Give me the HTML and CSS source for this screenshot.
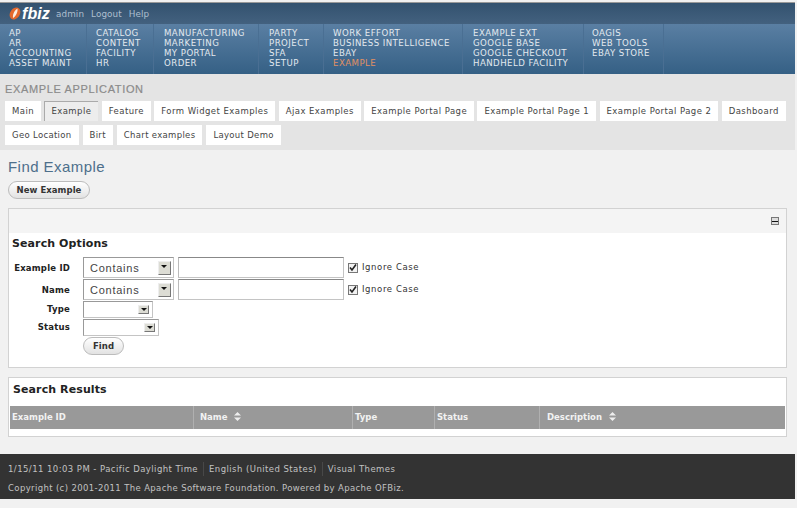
FILE: index.html
```html
<!DOCTYPE html>
<html>
<head>
<meta charset="utf-8">
<title>OFBiz: Example Application</title>
<link rel="stylesheet" href="styles.css">
</head>
<body>
<div class="page">

<div class="topbar">
	<div class="logo">
		<svg class="logo_o" width="13" height="13" viewBox="0 0 13 13">
			<ellipse cx="6" cy="6.5" rx="6.5" ry="4.8" transform="rotate(-55 6 6.5)" fill="#e4682c"/>
			<path d="M8.5 1.5C5.5 3.5 3.5 7 4 11c2-1 5-5 4.500-9.500z" fill="#fbeee2"/>
		</svg><span class="logo_text">fbiz</span>
	</div>
	<a>admin</a><a>Logout</a><a>Help</a>
</div>

<div class="appnav">
	<ul class="c1"><li>AP</li><li>AR</li><li>ACCOUNTING</li><li>ASSET MAINT</li></ul>
	<ul class="c2"><li>CATALOG</li><li>CONTENT</li><li>FACILITY</li><li>HR</li></ul>
	<ul class="c3"><li>MANUFACTURING</li><li>MARKETING</li><li>MY PORTAL</li><li>ORDER</li></ul>
	<ul class="c4"><li>PARTY</li><li>PROJECT</li><li>SFA</li><li>SETUP</li></ul>
	<ul class="c5"><li>WORK EFFORT</li><li>BUSINESS INTELLIGENCE</li><li>EBAY</li><li class="selected">EXAMPLE</li></ul>
	<ul class="c6"><li>EXAMPLE EXT</li><li>GOOGLE BASE</li><li>GOOGLE CHECKOUT</li><li>HANDHELD FACILITY</li></ul>
	<ul class="c7"><li>OAGIS</li><li>WEB TOOLS</li><li>EBAY STORE</li></ul>
</div>

<div class="appbar">
	<h2 class="apptitle">EXAMPLE APPLICATION</h2>
	<div class="tabs">
		<a>Main</a><a class="active">Example</a><a>Feature</a><a>Form Widget Examples</a><a>Ajax Examples</a><a>Example Portal Page</a><a>Example Portal Page 1</a><a>Example Portal Page 2</a><a>Dashboard</a>
	</div>
	<div class="tabs row2">
		<a>Geo Location</a><a>Birt</a><a>Chart examples</a><a>Layout Demo</a>
	</div>
</div>

<div class="content">
	<h1 class="pagetitle">Find Example</h1>
	<a class="button newbtn">New Example</a>

	<div class="box searchbox">
		<div class="boxhead"><span class="collapse"></span></div>
		<h3>Search Options</h3>
		<div class="form">
			<label>Example ID</label>
			<div class="field">
				<span class="select bigselect">Contains<i class="arrow"></i></span>
				<span class="input"></span>
				<span class="check"><svg width="10" height="10" viewBox="0 0 10 10"><path d="M2 4.500l2 2.500 4-5.500" fill="none" stroke="#222" stroke-width="1.600"/></svg></span>
				<span class="ignore">Ignore Case</span>
			</div>
			<label>Name</label>
			<div class="field">
				<span class="select bigselect">Contains<i class="arrow"></i></span>
				<span class="input"></span>
				<span class="check"><svg width="10" height="10" viewBox="0 0 10 10"><path d="M2 4.500l2 2.500 4-5.500" fill="none" stroke="#222" stroke-width="1.600"/></svg></span>
				<span class="ignore">Ignore Case</span>
			</div>
			<label class="small">Type</label>
			<div class="field small"><span class="select typeselect"><i class="arrow"></i></span></div>
			<label class="small">Status</label>
			<div class="field small"><span class="select statusselect"><i class="arrow"></i></span></div>
			<span></span>
			<div class="field"><a class="button findbtn">Find</a></div>
		</div>
	</div>

	<div class="box resultbox">
		<h3>Search Results</h3>
		<div class="thead">
			<span class="col1">Example ID</span>
			<span class="col2">Name <svg class="sort" width="7" height="9" viewBox="0 0 7 9"><path d="M3.500 0L7 3.500H0zM3.500 9L0 5.500h7z" fill="#eee"/></svg></span>
			<span class="col3">Type</span>
			<span class="col4">Status</span>
			<span class="col5">Description <svg class="sort" width="7" height="9" viewBox="0 0 7 9"><path d="M3.500 0L7 3.500H0zM3.500 9L0 5.500h7z" fill="#eee"/></svg></span>
		</div>
	</div>
</div>

<div class="footer">
	<div class="footline">
		<span class="footdate">1/15/11 10:03 PM - Pacific Daylight Time</span><span>English (United States)</span><span>Visual Themes</span>
	</div>
	<div class="copyright">Copyright (c) 2001-2011 The Apache Software Foundation. Powered by Apache OFBiz.</div>
</div>

</div>
</body>
</html>
```
FILE: styles.css
```css
* {
	box-sizing: border-box;
}
body {
	margin: 0;
	background: #f1f1f1;
	font-family: "DejaVu Sans", Verdana, sans-serif;
	font-size: 8.5px;
	color: #333;
}
.page {
	width: 795px;
	height: 508px;
	padding-top: 3px;
	background: #f1f1f1;
}
.topbar {
	display: flex;
	align-items: center;
	height: 21px;
	padding-left: 9px;
	background: linear-gradient(#33526f, #43617f);
	box-shadow: 0 -1px 0 #999;
	color: #aebfcf;
	font-size: 8.8px;
	letter-spacing: .1px;
}
.topbar a {
	margin-right: 7px;
}
.logo {
	display: flex;
	align-items: center;
	width: 47px;
}
.logo_text {
	font-family: "Liberation Sans", sans-serif;
	font-size: 16px;
	font-weight: bold;
	font-style: italic;
	color: #fff;
	line-height: 16px;
	letter-spacing: .1px;
}
.appnav {
	display: flex;
	height: 50px;
	background: linear-gradient(#5a7fa3, #356085);
}
.appnav ul {
	list-style: none;
	margin: 0;
	padding: 4px 0 0 0;
	border-right: 1px solid #4a6f93;
	height: 50px;
	color: #e3e9ef;
	line-height: 10px;
	font-size: 8.6px;
	letter-spacing: .45px;
	white-space: nowrap;
}
.appnav .selected {
	color: #e19063;
}
.c1 { width: 87px; padding-left: 9px !important; }
.c2 { width: 67px; padding-left: 9px !important; }
.c3 { width: 105px; padding-left: 10px !important; }
.c4 { width: 65px; padding-left: 10px !important; }
.c5 { width: 139px; padding-left: 9px !important; }
.c6 { width: 121px; padding-left: 10px !important; }
.c7 { width: 80px; padding-left: 8px !important; }
.appbar {
	height: 76px;
	padding: 10px 5px 0;
	background: #e4e4e4;
}
.apptitle {
	margin: 0 0 7px;
	height: 10px;
	font-size: 11px;
	line-height: 11px;
	font-weight: normal;
	font-family: "Liberation Sans", sans-serif;
	letter-spacing: .65px;
	color: #8b8b8b;
	-webkit-text-stroke: .2px #8b8b8b;
}
.tabs {
	display: flex;
	gap: 3.3px;
	margin-bottom: 4px;
}
.tabs a {
	height: 20px;
	line-height: 20px;
	padding: 0 7px;
	background: #fff;
	color: #444;
	letter-spacing: .45px;
	white-space: nowrap;
}
.row2 {
	gap: 4px;
}
.row2 a {
	letter-spacing: .32px;
}
.tabs .active {
	background: #ededed;
	border-top: 1px solid #aaa;
	border-left: 1px solid #aaa;
	line-height: 19px;
	padding: 0 7px 0 6px;
}
.content {
	height: 304px;
	padding: 8px 8px 0;
}
.pagetitle {
	margin: 0;
	height: 23px;
	font-family: "Liberation Sans", sans-serif;
	font-size: 15px;
	line-height: 18px;
	font-weight: normal;
	letter-spacing: .45px;
	color: #4d6f8b;
}
.button {
	display: block;
	height: 18px;
	line-height: 17px;
	text-align: center;
	background: linear-gradient(#fff, #e2e2e2);
	border: 1px solid #bcbcbc;
	border-radius: 9px;
	font-weight: bold;
	font-size: 8.5px;
	letter-spacing: .05px;
	color: #333;
}
.newbtn {
	width: 82px;
}
.box {
	width: 779px;
	background: #fff;
	border: 1px solid #d2d2d2;
}
.searchbox {
	height: 160px;
	margin-top: 9px;
}
.boxhead {
	display: flex;
	justify-content: flex-end;
	align-items: center;
	height: 24px;
	padding-right: 7px;
	background: #f4f4f4;
}
.collapse {
	display: flex;
	align-items: center;
	justify-content: center;
	width: 8px;
	height: 8px;
	border: 1px solid #777;
	background: #ddd;
}
.collapse::before {
	content: "";
	width: 6px;
	height: 1px;
	background: #111;
}
h3 {
	margin: 0;
	font-size: 11px;
	line-height: 13px;
	font-weight: bold;
	letter-spacing: .1px;
	color: #222;
}
.searchbox h3 {
	padding: 4px 0 0 3px;
	height: 24px;
}
.form {
	display: grid;
	grid-template-columns: 61px 1fr;
	grid-template-rows: 22px 22px 18px 18px 20px;
	column-gap: 13px;
	line-height: 22px;
}
.form label {
	text-align: right;
	font-weight: bold;
	color: #222;
	letter-spacing: .2px;
}
.form label.small {
	line-height: 16px;
	height: 18px;
}
.field {
	display: flex;
	align-items: flex-start;
}
.select {
	position: relative;
	display: block;
	height: 21px;
	border: 1px solid #c4c4c4;
	border-top-color: #999;
	border-left-color: #999;
	background: #fff;
	font-size: 11px;
	font-family: "Liberation Sans", sans-serif;
	letter-spacing: .75px;
	line-height: 20px;
	padding-left: 6px;
	color: #444;
}
.bigselect {
	width: 91px;
}
.typeselect {
	width: 70px;
	height: 17px;
}
.statusselect {
	width: 76px;
	height: 17px;
}
.arrow {
	position: absolute;
	top: 3px;
	right: 2px;
	width: 13px;
	height: 14px;
	background: #dcdcd4;
	border: 1px solid;
	border-color: #eee #777 #777 #eee;
}
.typeselect .arrow, .statusselect .arrow {
	top: 3px;
	right: 3px;
	width: 11px;
	height: 9px;
}
.arrow::after {
	content: "";
	position: absolute;
	left: 2px;
	top: 3px;
	border: 3px solid transparent;
	border-top: 3px solid #111;
	border-bottom: 0;
}
.typeselect .arrow::after, .statusselect .arrow::after {
	top: 2px;
}
.input {
	display: block;
	width: 166px;
	height: 21px;
	margin-left: 4px;
	background: #fff;
	border: 1px solid #c4c4c4;
	border-top-color: #888;
	border-left-color: #bbb;
}
.check {
	display: block;
	width: 10px;
	height: 10px;
	margin: 6px 0 0 4px;
	background: #f2f2f2;
	border: 1px solid #777;
	line-height: 0;
}
.check svg {
	margin: -1px;
}
.ignore {
	margin-left: 4px;
	line-height: 20px;
	color: #333;
	letter-spacing: .6px;
}
.findbtn {
	width: 41px;
}
.resultbox {
	height: 60px;
	margin-top: 9px;
	padding: 5px 1px 0;
}
.resultbox h3 {
	padding-left: 3px;
	height: 23px;
	line-height: 14px;
}
.thead {
	display: flex;
	width: 775px;
	height: 23px;
	background: #999;
	color: #f2f2f2;
	font-weight: bold;
	line-height: 23px;
}
.thead span {
	display: block;
	border-right: 1px solid #b0b0b0;
	padding-left: 5px;
	white-space: nowrap;
}
.thead .col1 { width: 184px; padding-left: 2px; }
.thead .col2 { width: 159px; padding-left: 6px; }
.thead .col3 { width: 82px; padding-left: 2px; }
.thead .col4 { width: 105px; padding-left: 2px; }
.thead .col5 { border: 0; padding-left: 7px; }
.sort {
	margin-left: 4px;
	vertical-align: -1px;
}
.footer {
	height: 45px;
	padding: 8px 8px 0;
	background: #333;
	color: #c2c2c2;
	letter-spacing: .37px;
}
.footline {
	display: flex;
	height: 14px;
	line-height: 14px;
	letter-spacing: .44px;
}
.footline span {
	padding-right: 5px;
	margin-right: 5px;
	border-right: 1px solid #484848;
}
.footline span:last-child {
	border: 0;
}
.copyright {
	margin-top: 5px;
	line-height: 14px;
}
```
